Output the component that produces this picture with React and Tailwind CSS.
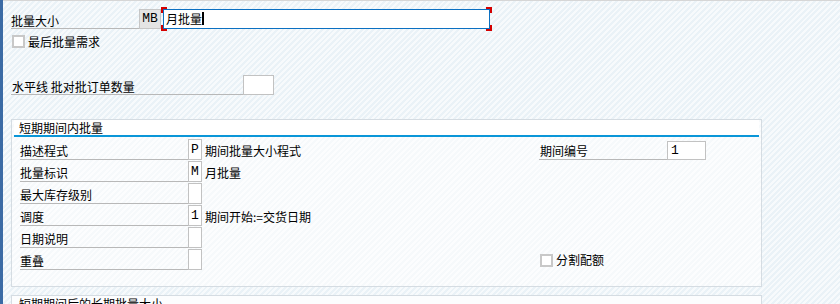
const cjk = "font-['Noto_Sans_CJK_SC','Noto_Sans',sans-serif]";
const mono = "font-['Liberation_Mono','DejaVu_Sans_Mono',monospace]";

const Corner = ({ pos }) => (
  <span className={`absolute w-[6px] h-[6px] border-[#d40000] ${pos}`} />
);

const Check = () => (
  <span className="w-[13px] h-[13px] border-2 border-[#c8c8c8] bg-white shrink-0" />
);

const Row = ({ label, value, text, right }) => (
  <div className="flex h-[21px] mb-[1px]">
    <div className="w-[524px] flex pl-[6px]">
      <div className="w-[168px] border-b border-[#b8b8b8] flex items-end pb-[1px] leading-[14px]">{label}</div>
      <div className={`w-[14px] border border-[#c2c2c2] bg-white flex items-center justify-center text-[13px] ${mono}`}>
        {value}
      </div>
      {text && <div className="ml-[3px] flex items-end pb-[2px] leading-[14px]">{text}</div>}
    </div>
    {right}
  </div>
);

export default function App() {
  return (
    <div
      className={`w-[840px] h-[304px] overflow-hidden flex text-[12px] text-black ${cjk} bg-[repeating-linear-gradient(135deg,#eaf2f7_0px,#eaf2f7_2px,#f7fafc_2px,#f7fafc_4px)]`}
    >
      <div className="w-[3px] bg-[#3b6ba5] shrink-0" />
      <div className="flex-1 flex flex-col">
        <div className="h-[5px] bg-white border-b border-[#d6d6d6]" />
        <div className="pl-[8px] flex flex-col">
          {/* 批量大小 */}
          <div className="flex h-[20px] mt-[8px]">
            <div className="w-[128px] border-b border-[#b8b8b8] flex items-end leading-[14px]">批量大小</div>
            <div className={`w-[22px] bg-[#e4e4e4] border border-[#c6c6c6] flex items-center justify-center text-[13px] ${mono}`}>
              MB
            </div>
            <div className="relative ml-[2px] w-[327px] border border-[#0b70c2] bg-white flex items-end leading-[14px] pl-[2px] pb-[2px]">
              <span>月批量</span>
              <span className="w-[2px] h-[13px] bg-black mb-[1px]" />
              <Corner pos="-top-[3px] -left-[3px] border-t-2 border-l-2" />
              <Corner pos="-top-[3px] -right-[3px] border-t-2 border-r-2" />
              <Corner pos="-bottom-[3px] -left-[3px] border-b-2 border-l-2" />
              <Corner pos="-bottom-[3px] -right-[3px] border-b-2 border-r-2" />
            </div>
          </div>

          {/* 最后批量需求 */}
          <div className="flex items-center h-[13px] mt-[6px] pl-[1px] gap-[3px] leading-[14px]">
            <Check />
            <span>最后批量需求</span>
          </div>

          {/* 水平线 */}
          <div className="flex h-[20px] mt-[27px]">
            <div className="w-[232px] border-b border-[#b8b8b8] flex items-end leading-[14px] pl-[1px]">
              水平线 批对批订单数量
            </div>
            <div className="w-[31px] border border-[#c2c2c2] bg-white" />
          </div>

          {/* 短期期间内批量 */}
          <div className="mt-[24px] w-[751px] h-[168px] border border-[#d5dce2] px-[2px] flex flex-col bg-[repeating-linear-gradient(135deg,#f6f9fb_0px,#f6f9fb_2px,#fcfdfe_2px,#fcfdfe_4px)]">
            <div className="h-[15px] bg-white pl-[5px] flex items-end leading-[14px]">短期期间内批量</div>
            <div className="h-[2px] bg-[#0a96d8]" />
            <div className="mt-[2px] flex flex-col">
              <Row
                label="描述程式"
                value="P"
                text="期间批量大小程式"
                right={
                  <div className="flex ml-[1px] mt-[2px] h-[19px]">
                    <div className="w-[128px] border-b border-[#b8b8b8] flex items-end pl-[1px] pb-[1px] leading-[14px]">期间编号</div>
                    <div className={`w-[39px] border border-[#c2c2c2] bg-white pl-[3px] flex items-center text-[13px] ${mono}`}>1</div>
                  </div>
                }
              />
              <Row label="批量标识" value="M" text="月批量" />
              <Row label="最大库存级别" />
              <Row label="调度" value="1" text="期间开始:=交货日期" />
              <Row label="日期说明" />
              <Row
                label="重叠"
                right={
                  <div className="flex items-end pb-[3px] ml-[2px] gap-[3px] leading-[14px]">
                    <Check />
                    <span>分割配额</span>
                  </div>
                }
              />
            </div>
          </div>

          {/* next group, cut off by the window edge */}
          <div className="mt-[8px] w-[751px] h-[40px] border border-[#d5dce2] bg-[#fcfdfe] px-[2px]">
            <div className="pl-[5px] pt-[1px] leading-[14px]">短期期间后的长期批量大小</div>
          </div>
        </div>
      </div>
    </div>
  );
}
